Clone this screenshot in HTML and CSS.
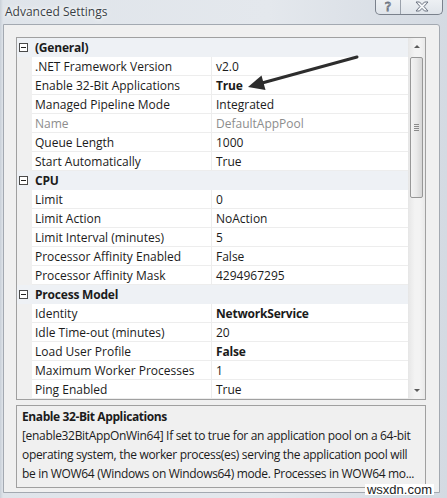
FILE: index.html
```html
<!DOCTYPE html>
<html>
<head>
    <title>Advanced Settings</title>
    <meta charset="utf-8">
    <link rel="stylesheet" href="styles.css">
</head>
<body>
    <div class="window">
        <div class="titlebar">
            <span class="title">Advanced Settings</span>
            <div class="caption-btns">
                <div class="cbtn help">?</div>
                <div class="cbtn close">
                    <svg width="14" height="11" viewBox="0 0 14 11">
                        <path d="M1 1 H4.5 L7 3.6 L9.5 1 H13 L9 5.5 L13 10 H9.5 L7 7.4 L4.5 10 H1 L5 5.5 Z" fill="#f4f6f8" stroke="#6b7280" stroke-width="1"/>
                    </svg>
                </div>
            </div>
        </div>

        <div class="client">
            <div class="grid">
                <div class="rows">
                    <div class="cat"><span class="margin"><span class="toggle"></span></span><span class="cat-name">(General)</span></div>
                    <div class="prop"><span class="margin"></span><span class="name">.NET Framework Version</span><span class="value">v2.0</span></div>
                    <div class="prop"><span class="margin"></span><span class="name">Enable 32-Bit Applications</span><span class="value bold">True</span></div>
                    <div class="prop"><span class="margin"></span><span class="name">Managed Pipeline Mode</span><span class="value">Integrated</span></div>
                    <div class="prop readonly"><span class="margin"></span><span class="name">Name</span><span class="value">DefaultAppPool</span></div>
                    <div class="prop"><span class="margin"></span><span class="name">Queue Length</span><span class="value">1000</span></div>
                    <div class="prop"><span class="margin"></span><span class="name">Start Automatically</span><span class="value">True</span></div>

                    <div class="cat"><span class="margin"><span class="toggle"></span></span><span class="cat-name">CPU</span></div>
                    <div class="prop"><span class="margin"></span><span class="name">Limit</span><span class="value">0</span></div>
                    <div class="prop"><span class="margin"></span><span class="name">Limit Action</span><span class="value">NoAction</span></div>
                    <div class="prop"><span class="margin"></span><span class="name">Limit Interval (minutes)</span><span class="value">5</span></div>
                    <div class="prop"><span class="margin"></span><span class="name">Processor Affinity Enabled</span><span class="value">False</span></div>
                    <div class="prop"><span class="margin"></span><span class="name">Processor Affinity Mask</span><span class="value">4294967295</span></div>

                    <div class="cat"><span class="margin"><span class="toggle"></span></span><span class="cat-name">Process Model</span></div>
                    <div class="prop"><span class="margin"></span><span class="name">Identity</span><span class="value bold">NetworkService</span></div>
                    <div class="prop"><span class="margin"></span><span class="name">Idle Time-out (minutes)</span><span class="value">20</span></div>
                    <div class="prop"><span class="margin"></span><span class="name">Load User Profile</span><span class="value bold">False</span></div>
                    <div class="prop"><span class="margin"></span><span class="name">Maximum Worker Processes</span><span class="value">1</span></div>
                    <div class="prop"><span class="margin"></span><span class="name">Ping Enabled</span><span class="value">True</span></div>
                </div>
                <div class="vscroll">
                    <div class="sbtn"><span class="tri-up"></span></div>
                    <div class="track">
                        <div class="thumb"><span class="grip"></span></div>
                    </div>
                    <div class="sbtn"><span class="tri-down"></span></div>
                </div>
            </div>

            <div class="desc">
                <div class="desc-title">Enable 32-Bit Applications</div>
                <div class="desc-line">[enable32BitAppOnWin64] If set to true for an application pool on a 64-bit</div>
                <div class="desc-line">operating system, the worker process(es) serving the application pool will</div>
                <div class="desc-line">be in WOW64 (Windows on Windows64) mode. Processes in WOW64 mo...</div>
            </div>
        </div>

        <!-- callout arrow drawn over the grid -->
        <svg class="arrow" width="447" height="498" viewBox="0 0 447 498">
            <line x1="357" y1="57" x2="262" y2="83" stroke="#2d2d2d" stroke-width="3" stroke-linecap="round"/>
            <polygon points="248,87 261.5,75.5 265.5,90" fill="#2d2d2d"/>
        </svg>

        <div class="watermark">wsxdn.com</div>
    </div>
</body>
</html>
```

FILE: styles.css
```css
body {
    margin: 0;
    background: #ffffff;
    font-family: "Open Sans", "Noto Sans", sans-serif;
    font-size: 12px;
    color: #1b1b1b;
}
.window {
    position: relative;
    width: 447px;
    height: 498px;
    box-sizing: border-box;
    padding: 0 7px 5px 3px;
    background: linear-gradient(90deg, #c9d0d8 0px, #dfe4ea 3px, #e4e8ed 60%, #d4dae2 100%);
    overflow: hidden;
}
.titlebar {
    height: 24px;
    display: flex;
    align-items: flex-start;
    justify-content: space-between;
}
.title {
    margin: 3px 0 0 2px;
    color: #3a3f46;
    font-size: 12px;
    text-shadow: 0 0 6px #ffffff, 0 0 3px #ffffff;
}
.caption-btns {
    display: flex;
    margin-right: -3px;
    margin-top: -1px;
    border: 1px solid #7a818c;
    border-top: none;
    border-radius: 0 0 5px 5px;
    background: linear-gradient(#eef1f4, #dfe4ea);
    height: 15px;
}
.cbtn {
    display: flex;
    align-items: center;
    justify-content: center;
    height: 15px;
}
.help {
    width: 24px;
    border-right: 1px solid #9aa1ab;
    color: #f6f8fa;
    font-family: "DejaVu Sans", sans-serif;
    font-size: 13px;
    line-height: 14px;
    -webkit-text-stroke: 0.8px #6b7280;
}
.close {
    width: 41px;
}
.client {
    background: #f0f0f0;
    border: 1px solid #a3a9b1;
    border-radius: 0 3px 0 0;
    height: 469px;
    box-sizing: border-box;
    padding: 12px 13px 4px 12px;
    display: flex;
    flex-direction: column;
    gap: 5px;
}
.grid {
    display: flex;
    border: 1px solid #a0a0a0;
    background: #ffffff;
    height: 363px;
    box-sizing: border-box;
}
.rows {
    flex: 1;
}
.cat, .prop {
    display: flex;
    height: 19px;
    line-height: 19px;
}
.cat {
    background: #eef1f5;
}
.margin {
    width: 15px;
    flex: none;
    background: #f0f0f0;
    display: flex;
    align-items: center;
}
.cat .margin {
    background: transparent;
}
.toggle {
    position: relative;
    width: 7px;
    height: 7px;
    margin-left: 2px;
    border: 1px solid #4a4a4a;
    background: #ffffff;
}
.toggle::after {
    content: "";
    position: absolute;
    left: 1px;
    top: 3px;
    width: 5px;
    height: 1px;
    background: #222;
}
.cat-name {
    padding-left: 3px;
    font-weight: bold;
    letter-spacing: -0.2px;
}
.name {
    width: 180px;
    box-sizing: border-box;
    padding-left: 3px;
    border-right: 1px solid #ededed;
    border-bottom: 1px solid #ededed;
    white-space: nowrap;
    overflow: hidden;
}
.value {
    flex: 1;
    padding-left: 4px;
    border-bottom: 1px solid #ededed;
    white-space: nowrap;
    overflow: hidden;
}
.bold {
    font-weight: bold;
    letter-spacing: -0.2px;
}
.readonly .name, .readonly .value {
    color: #8d8d8d;
}
.vscroll {
    width: 17px;
    flex: none;
    display: flex;
    flex-direction: column;
    background: linear-gradient(90deg, #e6e6e6, #f3f3f3 40%, #f3f3f3 70%, #e9e9e9);
}
.sbtn {
    height: 17px;
    display: flex;
    align-items: center;
    justify-content: center;
}
.tri-up {
    border-left: 3px solid transparent;
    border-right: 3px solid transparent;
    border-bottom: 3px solid #5a5a5a;
}
.tri-down {
    border-left: 3px solid transparent;
    border-right: 3px solid transparent;
    border-top: 3px solid #5a5a5a;
}
.track {
    flex: 1;
    padding: 2px 2px 0 2px;
}
.thumb {
    height: 141px;
    box-sizing: border-box;
    border: 1px solid #979797;
    border-radius: 2px;
    background: linear-gradient(90deg, #f3f3f3, #e9e9e9 50%, #d6d6d6);
    display: flex;
    align-items: center;
    justify-content: center;
}
.grip {
    width: 5px;
    height: 7px;
    background: repeating-linear-gradient(#8a8a8a 0 1px, transparent 1px 2px);
}
.desc {
    border: 1px solid #a0a0a0;
    height: 83px;
    box-sizing: border-box;
    padding: 1px 5px;
    line-height: 19px;
}
.desc-title {
    font-weight: bold;
    letter-spacing: -0.4px;
}
.desc-line {
    white-space: nowrap;
    overflow: hidden;
    letter-spacing: -0.32px;
}
.arrow {
    position: absolute;
    left: 0;
    top: 0;
    pointer-events: none;
}
.watermark {
    position: absolute;
    right: 13px;
    bottom: 3px;
    padding: 0 2px;
    background: #ffffff;
    font-family: "Liberation Sans", Arial, sans-serif;
    font-size: 13px;
    line-height: 11px;
    color: #222;
}
```
